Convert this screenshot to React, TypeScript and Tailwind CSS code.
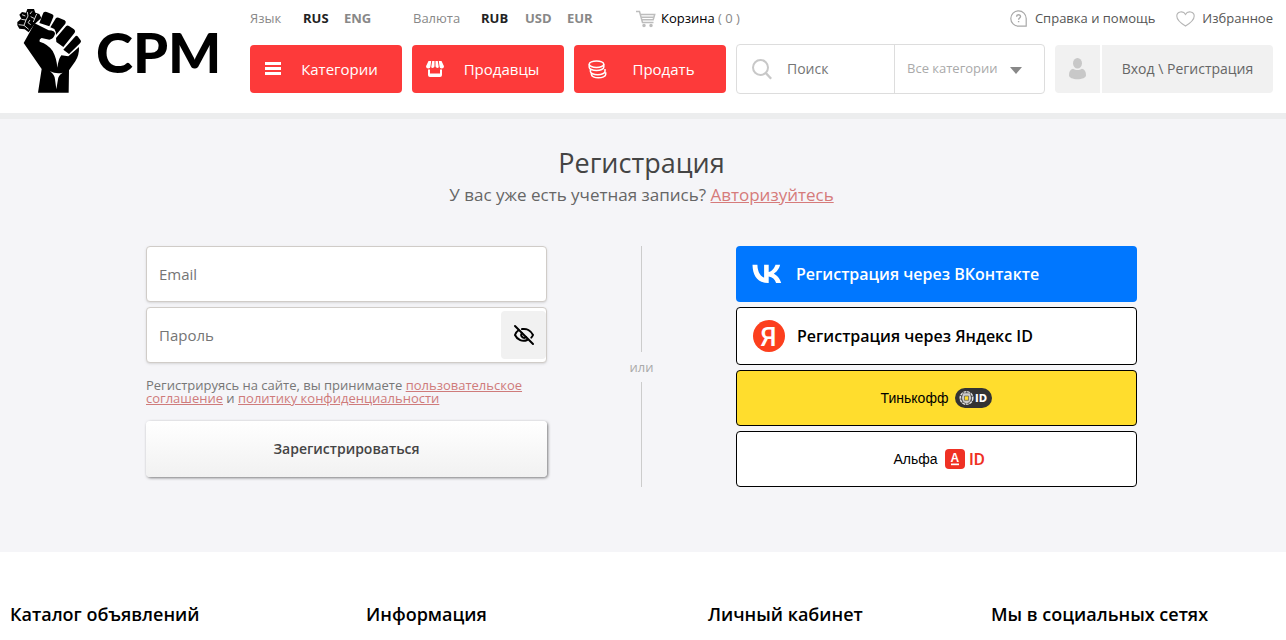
import React from 'react';

interface FooterColumn {
    title: string;
}

const footerColumns: FooterColumn[] = [
    { title: 'Каталог объявлений' },
    { title: 'Информация' },
    { title: 'Личный кабинет' },
    { title: 'Мы в социальных сетях' },
];

const FistLogo = () => (
    <svg width="69" height="87" viewBox="45 21 207 261" className="shrink-0" aria-hidden="true">
        {/* Microphone */}
        <path d="M52 66 L64 56 L58 44 L66 36 L78 38 L82 27 L102 27 L106 38 L118 42 L124 54 L104 72 L86 97 L74 88 L58 86 L52 76 Z" fill="#000" />
        <path
            d="M66 44 l10 4 M64 58 L78 60 L84 48 L82 36 M78 60 L72 76 L56 74 M72 76 L86 88 M92 50 L104 56 L100 66 M104 56 L110 42 M90 60 l-6 8 l8 6 M96 34 l-6 8"
            fill="none"
            stroke="#fff"
            strokeWidth="2.5"
        />
        {/* Fingers */}
        <path d="M130 38 Q134 34 140 36 L157 43 Q162 46 160 51 L148 79 L118 69 Z" fill="#000" />
        <path d="M168 54 Q171 51 176 53 L194 61 Q200 65 196 71 L168 105 Q168 94 163 87 L151 82 Z" fill="#000" />
        <path d="M198 79 Q202 75 207 78 L222 88 Q228 93 224 98 L190 141 L169 126 L168 114 Z" fill="#000" />
        <path d="M227 108 Q231 106 234 110 L242 121 Q245 126 240 130 L207 162 L190 149 Z" fill="#000" />
        {/* Hand and wrist */}
        <path
            d="M104 70 L146 91 Q166 92 165 102 Q161 117 148 119 L125 114 Q117 118 119 125 Q145 133 158 153 Q170 175 172 203 Q175 178 184 166 L205 169 L237 141 Q238 165 226 184 L207 211 L206 278 L114 278 L125 207 L71 129 Z"
            fill="#000"
        />
        <path d="M150 214 Q169 223 188 218 Q174 227 174 238 L169 268 L165 238 Q164 224 150 214 Z" fill="#fff" />
    </svg>
);

const VkIcon = () => (
    <svg width="30" height="20" viewBox="0 0 30 20" fill="#fff" aria-hidden="true">
        <path d="M16 19C6 19 .7 12.200 .5 .8h4.900c.2 8.400 3.900 11.900 6.700 12.600V.8h4.600V8c2.800-.3 5.800-3.600 6.800-7.200h4.600c-.8 4.300-4 7.600-6.300 8.900 2.300 1.100 6 3.900 7.400 9.300h-5.100c-1.100-3.400-3.800-6-7.400-6.400V19H16Z" />
    </svg>
);

const CartIcon = () => (
    <svg width="20" height="18" viewBox="0 0 20 18" fill="none" stroke="#bdbdbd" strokeWidth="1.500" aria-hidden="true">
        <path d="M0 1.500h3.500L6.500 12.500h11M4.300 4.500h14.400l-1.500 5.300H5.800M5 7.200h13" />
        <circle cx="8" cy="15.500" r="1" fill="#bdbdbd" />
        <circle cx="15" cy="15.500" r="1" fill="#bdbdbd" />
    </svg>
);

const HelpIcon = () => (
    <svg width="17" height="17" viewBox="0 0 17 17" fill="none" stroke="#a8a8a8" strokeWidth="1.200" aria-hidden="true">
        <path d="M8.500 .8a7.700 7.700 0 1 0 0 15.400h7.700V8.500A7.700 7.700 0 0 0 8.500 .8Z" />
        <path d="M6.600 6.700c0-2.600 4-2.500 3.900-.1 0 1.400-1.900 1.500-1.900 3.100M8.600 11v1.300" strokeWidth="1.400" />
    </svg>
);

const HeartIcon = () => (
    <svg width="19" height="16" viewBox="0 0 19 16" fill="none" stroke="#b5b5b5" strokeWidth="1.100" aria-hidden="true">
        <path d="M9.500 15C7.500 13.800 .8 9.300 .8 5 .8 .7 7.300-.7 9.500 3.400 11.700-.7 18.200 .7 18.200 5c0 4.300-6.700 8.800-8.700 10Z" />
    </svg>
);

const MenuIcon = () => (
    <svg width="16" height="14" viewBox="0 0 16 14" fill="#fff" aria-hidden="true">
        <path d="M0 0h16v3H0zM0 5h16v3H0zM0 10h16v3H0z" />
    </svg>
);

const ShopIcon = () => (
    <svg width="18" height="17" viewBox="0 0 18 17" fill="#fff" aria-hidden="true">
        <path d="M2.500 0h2.700L4.500 5.300a2.200 2.200 0 0 1-4.500 0ZM6.200 0h2.300v5.300a1.900 1.900 0 0 1-3.300 1ZM9.500 0h2.300l1 6.300a1.900 1.900 0 0 1-3.300-1ZM12.800 0h2.700L18 5.300a2.200 2.200 0 0 1-4.500 0Z" />
        <path d="M2 8.500h2v4h10v-4h2V14a2 2 0 0 1-2 2H4a2 2 0 0 1-2-2Z" />
    </svg>
);

const CoinsIcon = () => (
    <svg width="19" height="19" viewBox="0 0 19 19" fill="none" stroke="#fff" strokeWidth="1.500" aria-hidden="true">
        <ellipse cx="8.500" cy="4.200" rx="7.300" ry="3.300" />
        <path d="M1.200 4.200v3c0 1.800 3.300 3.300 7.300 3.300s7.300-1.500 7.300-3.300v-3M2.400 9.300v2.200c0 1.800 3.300 3.200 7.300 3.200 3.800 0 7.300-1.400 7.300-3.200V9M3.400 13.300v1.200c0 1.800 3.200 3.300 7 3.300s7.300-1.500 7.300-3.300v-2.300" />
    </svg>
);

const SearchIcon = () => (
    <svg width="20" height="21" viewBox="0 0 20 21" fill="none" stroke="#c8c8c8" strokeWidth="2" className="shrink-0" aria-hidden="true">
        <circle cx="8.500" cy="8.500" r="7.500" />
        <path d="m13.800 14 5.400 5.800" strokeWidth="2.400" />
    </svg>
);

const UserIcon = () => (
    <svg width="17" height="22" viewBox="0 0 17 22" fill="#c8c8c8" aria-hidden="true">
        <ellipse cx="8.500" cy="5.300" rx="4.500" ry="5.200" />
        <path d="M4 10.800c2.500 1.600 6.500 1.600 9 0 2.800.5 4 3.200 4 6.400 0 2.400-3.800 4-8.500 4S0 19.600 0 17.200c0-3.200 1.200-5.900 4-6.400Z" />
    </svg>
);

const EyeOffIcon = () => (
    <svg width="22" height="22" viewBox="0 0 22 22" fill="none" stroke="#000" strokeWidth="2" strokeLinecap="round" aria-hidden="true">
        <path d="M2 2l18 18" />
        <path d="M9 5.100c4.500-.8 9 1.500 11 5.900-.4 1-1 1.900-1.700 2.600M5.500 6.300C3.900 7.400 2.700 9 2 11c2.300 5 7.500 7 12.200 5" />
        <path d="M8.800 9c-1.400 2.200 0 4.800 2.400 4.900.8 0 1.500-.3 2-.8" />
    </svg>
);

const TinkoffBadge = () => (
    <svg width="37" height="20" viewBox="0 0 37 20" aria-hidden="true">
        <rect width="37" height="20" rx="10" fill="#333" />
        <circle cx="11.500" cy="10" r="6.300" fill="none" stroke="#e0e0e0" strokeWidth="1.500" strokeDasharray="3 .7" />
        <path d="M8 5h7l1.500 5-1.500 4-3.500 2L8 14l-1.500-4Z" fill="#ccc" stroke="#555" strokeWidth=".5" />
        <path d="M9.500 8h4v4.300h-4Z" fill="#ffdd2d" stroke="#444" strokeWidth=".6" />
        <text x="20" y="13.500" fill="#fff" fontFamily="DejaVu Sans, sans-serif" fontWeight="700" fontSize="10">ID</text>
    </svg>
);

const SignButton = ({ icon, label }: { icon: React.ReactNode; label: string }) => (
    <button type="button" className="flex h-12 w-[152px] items-center rounded bg-[#fd3a3a] pl-[13px] text-[15px] text-white">
        <span className="flex w-5 justify-center">{icon}</span>
        <span className="flex-1 pr-3 pl-1.5 text-center">{label}</span>
    </button>
);

const Header = () => (
    <header className="flex border-b-[6px] border-[#ecedee] bg-white pr-[13px] pb-[19px]">
        <a href="#" className="flex w-[250px] shrink-0 items-start pt-[7px] pl-[15px]">
            <FistLogo />
            <span className="pt-2 pl-3 font-[Lato] text-[56px] leading-[74px] font-black text-black">CPM</span>
        </a>

        <div className="flex-1">
            <div className="flex h-11 items-center pb-[7px] text-[13px] text-[#888]">
                <span className="w-[53px]">Язык</span>
                <a href="#" className="w-[41px] font-bold text-[#222]">RUS</a>
                <a href="#" className="w-[69px] font-bold">ENG</a>
                <span className="w-[68px]">Валюта</span>
                <a href="#" className="w-11 font-bold text-[#222]">RUB</a>
                <a href="#" className="w-[42px] font-bold">USD</a>
                <a href="#" className="w-[69px] font-bold">EUR</a>
                <a href="#" className="flex items-center gap-[5px]">
                    <CartIcon />
                    <span><span className="text-black">Корзина</span> ( 0 )</span>
                </a>
                <div className="ml-auto flex gap-[21px] text-[#555]">
                    <a href="#" className="flex items-center gap-2"><HelpIcon />Справка и помощь</a>
                    <a href="#" className="flex items-center gap-[7px]"><HeartIcon />Избранное</a>
                </div>
            </div>

            <div className="flex items-center gap-2.5">
                <SignButton icon={<MenuIcon />} label="Категории" />
                <SignButton icon={<ShopIcon />} label="Продавцы" />
                <SignButton icon={<CoinsIcon />} label="Продать" />

                <form className="flex h-[50px] flex-1 rounded border border-[#ddd] bg-white">
                    <label className="flex min-w-0 flex-1 items-center gap-[15px] pl-[15px]">
                        <SearchIcon />
                        <input type="text" aria-label="Поиск" placeholder="Поиск" className="w-full min-w-0 text-sm outline-none placeholder:text-[#757575]" />
                    </label>
                    <div className="relative w-[150px] border-l border-[#ddd]">
                        <select aria-label="Категория" className="h-full w-full appearance-none bg-transparent pl-3 text-[13px] text-[#aaa] outline-none">
                            <option>Все категории</option>
                        </select>
                        <svg className="pointer-events-none absolute top-[22px] right-[22px]" width="12" height="7" viewBox="0 0 12 7" aria-hidden="true">
                            <path d="M0 0h12L6 7Z" fill="#888" />
                        </svg>
                    </div>
                </form>

                <a href="#" className="flex h-12 gap-0.5 text-sm text-[#666]">
                    <span className="flex w-[45px] items-center justify-center rounded-l bg-[#f1f1f1]"><UserIcon /></span>
                    <span className="flex w-[171px] items-center justify-center rounded-r bg-[#f1f1f1]">Вход \ Регистрация</span>
                </a>
            </div>
        </div>
    </header>
);

const RegisterForm = () => (
    <form className="min-w-0 flex-1">
        <input
            type="email"
            aria-label="Email"
            placeholder="Email"
            className="block h-14 w-full rounded border border-[#d0ccc8] bg-white px-3 text-[15px] shadow-sm outline-none placeholder:text-[#757575]"
        />
        <div className="mt-[5px] flex h-14 items-center rounded border border-[#d0ccc8] bg-white shadow-sm">
            <input
                type="password"
                aria-label="Пароль"
                placeholder="Пароль"
                className="min-w-0 flex-1 px-3 text-[15px] outline-none placeholder:text-[#757575]"
            />
            <button type="button" aria-label="Показать пароль" className="flex h-12 w-[45px] items-center justify-center rounded bg-[#f1f1f1]">
                <EyeOffIcon />
            </button>
        </div>
        <p className="mt-4 text-[13px] leading-[13px] text-[#777]">
            Регистрируясь на сайте, вы принимаете <a href="#" className="text-[#cf7b7b] underline">пользовательское соглашение</a> и{' '}
            <a href="#" className="text-[#cf7b7b] underline">политику конфиденциальности</a>
        </p>
        <button
            type="submit"
            className="mt-4 h-14 w-full rounded bg-linear-to-b from-white to-[#f1f1f1] text-sm font-semibold text-[#444] shadow-[1px_1px_3px_rgba(0,0,0,0.5)]"
        >
            Зарегистрироваться
        </button>
    </form>
);

const SocialButtons = () => (
    <div className="flex min-w-0 flex-1 flex-col gap-[5px]">
        <button type="button" className="flex h-14 items-center gap-3.5 rounded bg-[#07f] pl-4 font-semibold text-white">
            <VkIcon />
            Регистрация через ВКонтакте
        </button>
        <button type="button" className="flex h-[58px] items-center gap-3 rounded border border-black bg-white pl-4 font-semibold text-black">
            <svg width="32" height="32" viewBox="0 0 32 32" aria-hidden="true">
                <circle cx="16" cy="16" r="16" fill="#fc3f1d" />
                <text x="15.500" y="25.500" textAnchor="middle" fill="#fff" fontFamily="Roboto, sans-serif" fontWeight="500" fontSize="26">Я</text>
            </svg>
            Регистрация через Яндекс ID
        </button>
        <button type="button" className="flex h-14 items-center justify-center gap-[7px] rounded border border-black bg-[#ffdd2d] font-['Liberation_Sans'] text-sm text-black">
            Тинькофф
            <TinkoffBadge />
        </button>
        <button type="button" className="flex h-14 items-center justify-center gap-[7px] rounded border border-black bg-white pl-1.5 font-['Liberation_Sans'] text-sm text-black">
            Альфа
            <svg width="41" height="20" viewBox="0 0 41 20" aria-hidden="true">
                <rect width="20" height="20" rx="4" fill="#ef3124" />
                <text x="5.500" y="12.500" fill="#fff" fontFamily="Liberation Sans, sans-serif" fontWeight="700" fontSize="12">A</text>
                <path d="M6 14.500h8v1.700H6z" fill="#fff" />
                <text x="24" y="16" fill="#ef3124" fontFamily="Roboto, sans-serif" fontWeight="500" fontSize="17">ID</text>
            </svg>
        </button>
    </div>
);

const App: React.FC = () => {
    return (
        <div className="min-h-screen bg-white font-['Open_Sans',sans-serif]">
            <Header />

            <main className="bg-[#f5f5f8] pt-6 pr-[3px] pb-[65px]">
                <h1 className="text-center text-[27px] leading-10 text-[#444]">Регистрация</h1>
                <p className="text-center text-[17px] leading-6 text-[#666]">
                    У вас уже есть учетная запись? <a href="#" className="text-[#d67b7b] underline">Авторизуйтесь</a>
                </p>

                <div className="mx-auto mt-[39px] flex max-w-[991px]">
                    <RegisterForm />
                    <div className="flex w-[189px] flex-col items-center text-[13px] leading-[30px] text-[#aaa]">
                        <span className="w-px flex-1 bg-[#ccc]" />
                        или
                        <span className="w-px flex-1 bg-[#ccc]" />
                    </div>
                    <SocialButtons />
                </div>
            </main>

            <footer className="grid grid-cols-[356fr_342fr_283fr_295fr] pt-[50px] pl-2.5">
                {footerColumns.map((column) => (
                    <h2 key={column.title} className="text-lg leading-6 font-semibold text-black">{column.title}</h2>
                ))}
            </footer>
        </div>
    );
};

export default App;
